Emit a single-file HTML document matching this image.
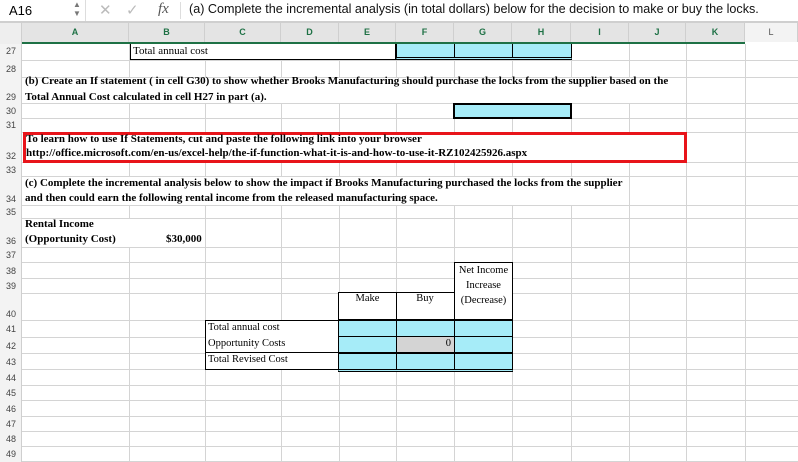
<!DOCTYPE html>
<html><head><meta charset="utf-8"><style>
body{margin:0;width:798px;height:462px;overflow:hidden;background:#fff;position:relative;font-family:"Liberation Serif",serif;}
div{position:absolute;box-sizing:border-box;}
.v{width:1px;background:#d4d4d4;top:44px;height:418px;}
.h{height:1px;background:#d4d4d4;left:22px;width:776px;}
.rl{left:0;width:22px;font-family:"Liberation Sans",sans-serif;font-size:9px;color:#444;text-align:center;}
.ch{top:23px;height:19px;font-family:"Liberation Sans",sans-serif;font-size:9px;font-weight:bold;color:#1e7145;text-align:center;line-height:19px;background:#e4e4e4;border-right:1px solid #cfcfcf;}
.t{font-size:10.5px;white-space:nowrap;color:#000;}
.b{font-weight:bold;font-size:11px;}
.w{background:#fff;}
.cy{background:#a6ecf8;}
</style></head><body>
<div style="left:0;top:0;width:798px;height:21px;background:#fff;"></div>
<div style="left:0;top:21px;width:798px;height:2px;background:#cfcfcf;"></div>
<div style="left:9px;top:3px;font-family:'Liberation Sans',sans-serif;font-size:13px;">A16</div>
<div style="left:73px;top:0px;font-size:8px;color:#777;font-family:'Liberation Sans',sans-serif;line-height:9px;">▲<br>▼</div>
<div style="left:85px;top:0;width:1px;height:21px;background:#ddd;"></div>
<div style="left:99px;top:1px;font-family:'Liberation Sans',sans-serif;font-size:15px;color:#bbb;">✕</div>
<div style="left:126px;top:1px;font-family:'Liberation Sans',sans-serif;font-size:15px;color:#bbb;">✓</div>
<div style="left:158px;top:1px;font-size:15px;font-style:italic;color:#555;">fx</div>
<div style="left:180px;top:2px;width:1px;height:17px;background:#ddd;"></div>
<div style="left:189px;top:2px;font-family:'Liberation Sans',sans-serif;font-size:12.6px;white-space:nowrap;color:#111;">(a) Complete the incremental analysis (in total dollars) below for the decision to make or buy the locks.</div>
<div style="left:0;top:23px;width:22px;height:21px;background:#eee;border-right:1px solid #cfcfcf;"></div>
<div class="ch" style="left:22px;width:107px;">A</div>
<div class="ch" style="left:129px;width:76px;">B</div>
<div class="ch" style="left:205px;width:76px;">C</div>
<div class="ch" style="left:281px;width:58px;">D</div>
<div class="ch" style="left:339px;width:57px;">E</div>
<div class="ch" style="left:396px;width:58px;">F</div>
<div class="ch" style="left:454px;width:58px;">G</div>
<div class="ch" style="left:512px;width:59px;">H</div>
<div class="ch" style="left:571px;width:58px;">I</div>
<div class="ch" style="left:629px;width:57px;">J</div>
<div class="ch" style="left:686px;width:59px;">K</div>
<div class="ch" style="left:745px;width:53px;background:#f3f3f3;color:#555;font-weight:normal;">L</div>
<div style="left:22px;top:42px;width:723px;height:2px;background:#1e7145;"></div>
<div style="left:0;top:44px;width:22px;height:418px;background:#f3f3f3;border-right:1px solid #cfcfcf;"></div>
<div class="v" style="left:129px"></div><div class="v" style="left:205px"></div><div class="v" style="left:281px"></div><div class="v" style="left:339px"></div><div class="v" style="left:396px"></div><div class="v" style="left:454px"></div><div class="v" style="left:512px"></div><div class="v" style="left:571px"></div><div class="v" style="left:629px"></div><div class="v" style="left:686px"></div><div class="v" style="left:745px"></div>
<div class="h" style="top:60px"></div><div class="h" style="top:77px"></div><div class="h" style="top:103px"></div><div class="h" style="top:118px"></div><div class="h" style="top:132px"></div><div class="h" style="top:162px"></div><div class="h" style="top:176px"></div><div class="h" style="top:205px"></div><div class="h" style="top:218px"></div><div class="h" style="top:247px"></div><div class="h" style="top:262px"></div><div class="h" style="top:278px"></div><div class="h" style="top:293px"></div><div class="h" style="top:320px"></div><div class="h" style="top:337px"></div><div class="h" style="top:353px"></div><div class="h" style="top:369px"></div><div class="h" style="top:385px"></div><div class="h" style="top:400px"></div><div class="h" style="top:416px"></div><div class="h" style="top:431px"></div><div class="h" style="top:446px"></div><div class="h" style="top:461px"></div>
<div class="rl" style="top:46px">27</div><div class="rl" style="top:64px">28</div><div class="rl" style="top:92px">29</div><div class="rl" style="top:106px">30</div><div class="rl" style="top:120px">31</div><div class="rl" style="top:151px">32</div><div class="rl" style="top:165px">33</div><div class="rl" style="top:194px">34</div><div class="rl" style="top:207px">35</div><div class="rl" style="top:236px">36</div><div class="rl" style="top:250px">37</div><div class="rl" style="top:266px">38</div><div class="rl" style="top:281px">39</div><div class="rl" style="top:309px">40</div><div class="rl" style="top:324px">41</div><div class="rl" style="top:341px">42</div><div class="rl" style="top:357px">43</div><div class="rl" style="top:373px">44</div><div class="rl" style="top:388px">45</div><div class="rl" style="top:404px">46</div><div class="rl" style="top:419px">47</div><div class="rl" style="top:434px">48</div><div class="rl" style="top:449px">49</div>
<div style="left:130px;top:44px;width:266px;height:16px;background:#fff;border:1px solid #000;border-top:none;"></div>
<div class="t" style="left:133px;top:45px;font-size:11px;">Total annual cost</div>
<div class="cy" style="left:396px;top:44px;width:176px;height:16px;border-left:1px solid #000;border-right:1px solid #000;border-bottom:3px double #000;"></div>
<div style="left:454px;top:44px;width:1px;height:14px;background:#000"></div>
<div style="left:512px;top:44px;width:1px;height:14px;background:#000"></div>
<div class="w" style="left:23px;top:78px;width:663px;height:25px;"></div>
<div class="t b" style="left:25px;top:75px;">(b) Create an If statement ( in cell G30) to show whether Brooks Manufacturing should purchase the locks from the supplier based on the</div>
<div class="t b" style="left:25px;top:91px;">Total Annual Cost calculated in cell H27 in part (a).</div>
<div class="cy" style="left:453px;top:103px;width:119px;height:16px;border:2px solid #000;"></div>
<div class="w" style="left:23px;top:132px;width:664px;height:31px;border:3px solid #e8141a;"></div>
<div class="t b" style="left:26px;top:133px;">To learn how to use If Statements, cut and paste the following link into your browser</div>
<div class="t b" style="left:26px;top:147px;">http://office.microsoft.com/en-us/excel-help/the-if-function-what-it-is-and-how-to-use-it-RZ102425926.aspx</div>
<div class="w" style="left:23px;top:177px;width:605px;height:28px;"></div>
<div class="t b" style="left:25px;top:177px;">(c) Complete the incremental analysis below to show the impact if Brooks Manufacturing purchased the locks from the supplier</div>
<div class="t b" style="left:25px;top:192px;">and then could earn the following rental income from the released manufacturing space.</div>
<div class="w" style="left:23px;top:219px;width:181px;height:28px;"></div>
<div class="t b" style="left:25px;top:218px;">Rental Income</div>
<div class="t b" style="left:25px;top:233px;">(Opportunity Cost)</div>
<div class="t b" style="left:166px;top:233px;">$30,000</div>
<div class="w" style="left:454px;top:262px;width:59px;height:59px;border:1px solid #000;border-bottom:2px solid #000;"></div>
<div class="t" style="left:454px;top:263px;width:59px;text-align:center;line-height:15px;white-space:normal;">Net Income Increase (Decrease)</div>
<div class="w" style="left:338px;top:292px;width:117px;height:29px;border:1px solid #000;border-bottom:2px solid #000;"></div>
<div style="left:396px;top:292px;width:1px;height:29px;background:#000"></div>
<div class="t" style="left:339px;top:293px;width:57px;text-align:center;">Make</div>
<div class="t" style="left:396px;top:293px;width:58px;text-align:center;">Buy</div>
<div class="w" style="left:205px;top:320px;width:134px;height:50px;border:1px solid #000;"></div>
<div style="left:205px;top:352px;width:134px;height:1px;background:#000"></div>
<div class="t" style="left:208px;top:322px;">Total annual cost</div>
<div class="t" style="left:208px;top:338px;">Opportunity Costs</div>
<div class="t" style="left:208px;top:354px;">Total Revised Cost</div>
<div class="cy" style="left:338px;top:320px;width:175px;height:52px;border:1px solid #000;border-bottom:3px double #000;"></div>
<div style="left:396px;top:337px;width:58px;height:16px;background:#d4d4d4;"></div>
<div class="t" style="left:396px;top:338px;width:55px;text-align:right;">0</div>
<div style="left:396px;top:320px;width:1px;height:50px;background:#000"></div>
<div style="left:454px;top:320px;width:1px;height:50px;background:#000"></div>
<div style="left:338px;top:336px;width:175px;height:1px;background:#000"></div>
<div style="left:338px;top:352px;width:175px;height:2px;background:#000"></div>
</body></html>
